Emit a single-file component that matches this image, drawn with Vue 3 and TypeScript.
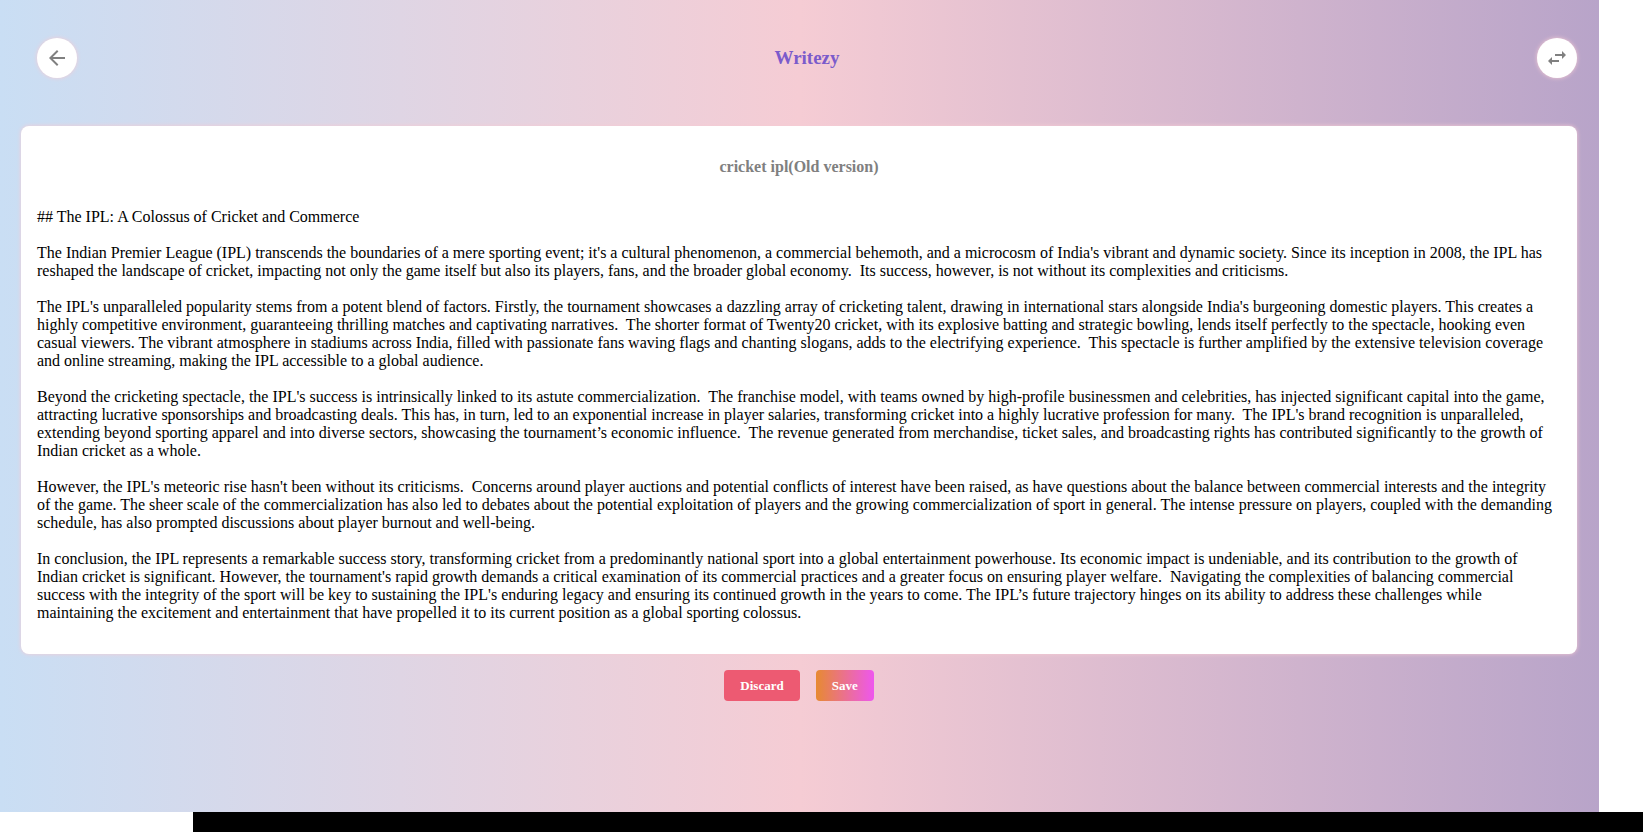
<script setup lang="ts">
const heading: string = 'cricket ipl(Old version)'

const paragraphs: string[] = [
  '## The IPL: A Colossus of Cricket and Commerce',
  "The Indian Premier League (IPL) transcends the boundaries of a mere sporting event; it's a cultural phenomenon, a commercial behemoth, and a microcosm of India's vibrant and dynamic society. Since its inception in 2008, the IPL has reshaped the landscape of cricket, impacting not only the game itself but also its players, fans, and the broader global economy.  Its success, however, is not without its complexities and criticisms.",
  "The IPL's unparalleled popularity stems from a potent blend of factors. Firstly, the tournament showcases a dazzling array of cricketing talent, drawing in international stars alongside India's burgeoning domestic players. This creates a highly competitive environment, guaranteeing thrilling matches and captivating narratives.  The shorter format of Twenty20 cricket, with its explosive batting and strategic bowling, lends itself perfectly to the spectacle, hooking even casual viewers. The vibrant atmosphere in stadiums across India, filled with passionate fans waving flags and chanting slogans, adds to the electrifying experience.  This spectacle is further amplified by the extensive television coverage and online streaming, making the IPL accessible to a global audience.",
  "Beyond the cricketing spectacle, the IPL's success is intrinsically linked to its astute commercialization.  The franchise model, with teams owned by high-profile businessmen and celebrities, has injected significant capital into the game, attracting lucrative sponsorships and broadcasting deals. This has, in turn, led to an exponential increase in player salaries, transforming cricket into a highly lucrative profession for many.  The IPL's brand recognition is unparalleled, extending beyond sporting apparel and into diverse sectors, showcasing the tournament’s economic influence.  The revenue generated from merchandise, ticket sales, and broadcasting rights has contributed significantly to the growth of Indian cricket as a whole.",
  "However, the IPL's meteoric rise hasn't been without its criticisms.  Concerns around player auctions and potential conflicts of interest have been raised, as have questions about the balance between commercial interests and the integrity of the game. The sheer scale of the commercialization has also led to debates about the potential exploitation of players and the growing commercialization of sport in general. The intense pressure on players, coupled with the demanding schedule, has also prompted discussions about player burnout and well-being.",
  "In conclusion, the IPL represents a remarkable success story, transforming cricket from a predominantly national sport into a global entertainment powerhouse. Its economic impact is undeniable, and its contribution to the growth of Indian cricket is significant. However, the tournament's rapid growth demands a critical examination of its commercial practices and a greater focus on ensuring player welfare.  Navigating the complexities of balancing commercial success with the integrity of the sport will be key to sustaining the IPL's enduring legacy and ensuring its continued growth in the years to come. The IPL’s future trajectory hinges on its ability to address these challenges while maintaining the excitement and entertainment that have propelled it to its current position as a global sporting colossus.",
]
</script>

<template>
  <div class="shell">
    <div class="page">
      <header class="topbar">
        <button class="round" type="button" aria-label="Back">
          <svg viewBox="0 0 24 24" aria-hidden="true">
            <path d="M20 11H7.83l5.59-5.59L12 4l-8 8 8 8 1.41-1.41L7.83 13H20v-2z" />
          </svg>
        </button>
        <h1 class="brand">Writezy</h1>
        <button class="round" type="button" aria-label="Switch version">
          <svg viewBox="0 0 24 24" aria-hidden="true">
            <path d="M6.99 11 3 15l3.99 4v-3H14v-2H6.99v-3zM21 9l-3.99-4v3H10v2h7.01v3L21 9z" />
          </svg>
        </button>
      </header>

      <main class="content">
        <article class="card">
          <h2 class="heading">{{ heading }}</h2>
          <p v-for="(text, i) in paragraphs" :key="i" class="text">{{ text }}</p>
        </article>
        <div class="actions">
          <button class="action discard" type="button">Discard</button>
          <button class="action save" type="button">Save</button>
        </div>
      </main>
    </div>
    <footer class="strip"></footer>
  </div>
</template>

<style>
body {
  margin: 0;
  background: #fff;
}
</style>

<style scoped>
.shell {
  min-height: 100vh;
  display: flex;
  flex-direction: column;
  font-family: "Liberation Serif", "Times New Roman", serif;
  font-size: 16px;
  line-height: 18px;
  color: #000;
}

.page {
  flex: 1;
  margin-right: 44px;
  padding: 38px 22px 16px 21px;
  background: linear-gradient(to right, #c9def4, #f5ccd4, #b8a4c9);
}

.topbar {
  display: flex;
  align-items: center;
  justify-content: space-between;
  padding-left: 16px;
  margin-bottom: 48px;
}

.round {
  width: 40px;
  height: 40px;
  padding: 0;
  border: 0;
  border-radius: 50%;
  display: grid;
  place-items: center;
  background: #fff;
  box-shadow: 0 0 4px #f5ccd4;
  cursor: pointer;
}

.round svg {
  width: 24px;
  height: 24px;
  fill: #808080;
}

.brand {
  margin: 0;
  font-size: 19px;
  line-height: 22px;
  color: #7b5bcb;
}

.card {
  padding: 32px 16px;
  border-radius: 8px;
  background: #fff;
  box-shadow: 0 0 4px #f5ccd4;
}

.heading {
  margin: 0 0 32px;
  font-size: 16px;
  line-height: 18px;
  text-align: center;
  color: #808080;
}

.text {
  margin: 0;
  white-space: pre-wrap;
}

.text + .text {
  margin-top: 18px;
}

.actions {
  display: flex;
  justify-content: center;
  gap: 16px;
  margin-top: 16px;
}

.action {
  padding: 8px 16px;
  border: 0;
  border-radius: 4px;
  font-family: inherit;
  font-size: 13px;
  font-weight: bold;
  line-height: 15px;
  color: #fff;
  cursor: pointer;
}

.discard {
  background: #ed5a72;
}

.save {
  background: linear-gradient(to right, #e78a31, #ee57ee);
}

.strip {
  height: 20px;
  margin-left: 193px;
  background: #000;
}
</style>
